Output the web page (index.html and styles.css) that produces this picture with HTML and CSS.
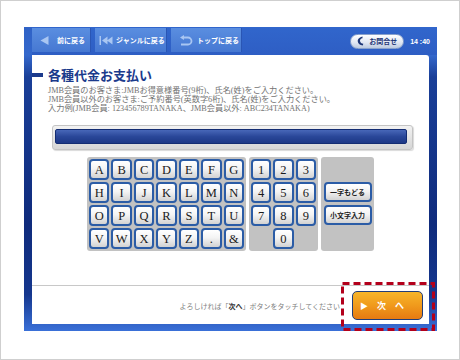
FILE: index.html
```html
<!DOCTYPE html>
<html lang="ja">
<head>
  <meta charset="UTF-8">
  <title>各種代金お支払い</title>
  <link rel="stylesheet" href="styles.css">
</head>
<body>
  <div class="page">
    <div class="frame">
      <div class="header">
        <button class="nav-btn nav-back">
          <svg width="9" height="11" viewBox="0 0 9 11"><path d="M0.5 5.5 L8.5 1 L8.5 10 Z" fill="#a9c6f2"/></svg>
          前に戻る
        </button>
        <button class="nav-btn nav-genre">
          <svg width="15" height="11" viewBox="0 0 15 11"><rect x="0.5" y="1" width="1.5" height="9" fill="#a9c6f2"/><path d="M3 5.5 L8.5 1.5 L8.5 9.5 Z M8 5.5 L13.5 1.5 L13.5 9.5 Z" fill="#a9c6f2"/></svg>
          ジャンルに戻る
        </button>
        <button class="nav-btn nav-top">
          <svg width="14" height="11" viewBox="0 0 14 11"><path d="M4 2.5 H9 A3.5 3.5 0 0 1 9 9.5 H2" fill="none" stroke="#a9c6f2" stroke-width="1.8"/><path d="M1 2.5 L5 0 L5 5 Z" fill="#a9c6f2"/></svg>
          トップに戻る
        </button>
        <div class="header-right">
          <button class="contact-btn">
            <svg width="7" height="10" viewBox="0 0 7 10"><path d="M5.5 0.5 C1.5 1.5 0.5 4 0.8 5.5 C1 7.5 3 9.3 5.8 9.5 L6.3 7.8 C4.5 7.6 3.2 6.5 3 5 C2.9 3.6 3.8 2.4 5.5 2.2 Z" fill="#1c3575"/></svg>
            お問合せ
          </button>
          <span class="clock">14 :40</span>
        </div>
      </div>

      <div class="panel">
        <h1 class="title"><span class="title-mark"></span>各種代金お支払い</h1>
        <p class="desc">
          JMB会員のお客さま:JMBお得意様番号(9桁)、氏名(姓)をご入力ください。<br>
          JMB会員以外のお客さま:ご予約番号(英数字6桁)、氏名(姓)をご入力ください。<br>
          入力例(JMB会員: 123456789TANAKA、JMB会員以外: ABC234TANAKA)
        </p>

        <div class="input-box"><div class="input-bar"></div></div>

        <div class="keyboard">
          <div class="pad pad-alpha">
            <button class="key">A</button><button class="key">B</button><button class="key">C</button><button class="key">D</button><button class="key">E</button><button class="key">F</button><button class="key">G</button>
            <button class="key">H</button><button class="key">I</button><button class="key">J</button><button class="key">K</button><button class="key">L</button><button class="key">M</button><button class="key">N</button>
            <button class="key">O</button><button class="key">P</button><button class="key">Q</button><button class="key">R</button><button class="key">S</button><button class="key">T</button><button class="key">U</button>
            <button class="key">V</button><button class="key">W</button><button class="key">X</button><button class="key">Y</button><button class="key">Z</button><button class="key">.</button><button class="key">&amp;</button>
          </div>
          <div class="pad pad-num">
            <button class="key">1</button><button class="key">2</button><button class="key">3</button>
            <button class="key">4</button><button class="key">5</button><button class="key">6</button>
            <button class="key">7</button><button class="key">8</button><button class="key">9</button>
            <button class="key key-zero">0</button>
          </div>
          <div class="pad pad-func">
            <button class="func-btn">一字もどる</button>
            <button class="func-btn">小文字入力</button>
          </div>
        </div>

        <div class="footer">
          <span class="hint">よろしければ「<b>次へ</b>」ボタンをタッチしてください</span>
          <button class="next-btn"><span class="next-arrow">&#9654;</span>次　へ</button>
        </div>
      </div>

      <svg class="highlight" width="94" height="49" viewBox="0 0 94 49">
        <rect x="1.5" y="1.5" width="91" height="46" fill="none" stroke="#b3001b" stroke-width="3" stroke-dasharray="7 4"/>
      </svg>
    </div>
  </div>
</body>
</html>
```

FILE: styles.css
```css
* {
  margin: 0;
  padding: 0;
  box-sizing: border-box;
}

body {
  background: #fff;
  font-family: "Noto Sans CJK JP", "Noto Sans", sans-serif;
}

.page {
  width: 460px;
  height: 360px;
  border: 1px solid #cfcfcf;
  padding: 26px 0 0 23px;
}

.frame {
  position: relative;
  width: 413px;
  height: 304px;
  display: flex;
  flex-direction: column;
  padding: 0 8px 7px 8px;
  background: linear-gradient(to bottom, #2f62c6 0, #3468cc 28px, #1a3f98 50px, #0f2b7c 65%, #15378e 88%, #3a70d8 100%);
}

/* header */

.header {
  height: 28px;
  display: flex;
  align-items: flex-start;
  padding-top: 1px;
  margin: 0 -8px 0 0;
  background: linear-gradient(to bottom, #3166cc, #2e5ec4);
}

.nav-btn {
  height: 24px;
  display: flex;
  align-items: center;
  margin-right: 4px;
  border: none;
  border-right: 1px solid #2a56b4;
  background: linear-gradient(to bottom, #5a8ee0, #4678d2);
  color: #fff;
  font-family: "Noto Sans CJK JP", sans-serif;
  font-size: 7px;
  font-weight: bold;
  white-space: nowrap;
}

.nav-back {
  width: 59px;
  padding-left: 8px;
  gap: 8px;
}

.nav-genre {
  width: 72px;
  padding-left: 4px;
  gap: 2px;
}

.nav-top {
  width: 71px;
  padding-left: 8px;
  gap: 4px;
}

.header-right {
  margin-left: auto;
  display: flex;
  align-items: center;
  height: 26px;
  padding-right: 7px;
}

.contact-btn {
  width: 54px;
  height: 15px;
  border-radius: 8px;
  border: 1px solid #8aa2cc;
  background: linear-gradient(to bottom, #ffffff, #dfe6f2 60%, #bccadf);
  display: flex;
  align-items: center;
  gap: 5px;
  padding-left: 6px;
  color: #1c3575;
  font-family: "Noto Sans CJK JP", sans-serif;
  font-size: 7px;
  font-weight: bold;
  white-space: nowrap;
}

.clock {
  margin-left: 6px;
  color: #fff;
  font-family: "Liberation Sans", sans-serif;
  font-size: 7px;
  font-weight: bold;
}

/* panel */

.panel {
  flex: 1;
  background: #fff;
  border-top-right-radius: 3px;
  display: flex;
  flex-direction: column;
  padding-top: 12px;
}

.title {
  display: flex;
  align-items: center;
  gap: 5px;
  height: 15px;
  color: #1b3a8c;
  font-size: 13px;
  font-weight: bold;
  line-height: 15px;
}

.title-mark {
  width: 11px;
  height: 4px;
  background: #1b3a8c;
}

.desc {
  margin: 4px 0 0 16px;
  color: #737373;
  font-family: "Liberation Serif", "Noto Sans CJK JP", serif;
  font-size: 8.2px;
  line-height: 9.2px;
}

.input-box {
  width: 361px;
  height: 25px;
  margin: 11px 0 0 20px;
  padding: 3px 5px 5px 2px;
  border: 1px solid #c4c4c4;
  border-radius: 3px;
  background: linear-gradient(to bottom, #f2f2f2, #d6d6d6);
  box-shadow: 1px 1px 1px rgba(0, 0, 0, 0.15);
}

.input-bar {
  height: 100%;
  border: 1px solid #132c72;
  border-radius: 2px;
  background: linear-gradient(to bottom, #4867b8, #2a4799 50%, #1d3886);
}

/* keyboard */

.keyboard {
  display: flex;
  gap: 3px;
  margin: 7px 0 0 55px;
}

.pad {
  height: 94px;
  padding: 2px;
  border-radius: 3px;
  background: #c2c2c2;
}

.pad-alpha {
  width: 159px;
  display: grid;
  grid-template-columns: repeat(7, 1fr);
  grid-template-rows: repeat(4, 1fr);
  gap: 2px;
}

.pad-num {
  width: 69px;
  display: grid;
  grid-template-columns: repeat(3, 1fr);
  grid-template-rows: repeat(4, 1fr);
  gap: 2px;
}

.key {
  border: 2px solid #2b5ca6;
  border-radius: 4px;
  background: linear-gradient(to bottom, #ffffff, #f4f4f4 45%, #d2d2d2);
  color: #1a1a1a;
  font-family: "Liberation Serif", serif;
  font-size: 12.5px;
  line-height: 1;
  padding-top: 2px;
}

.key-zero {
  grid-column: 2;
}

.pad-func {
  width: 53px;
  display: flex;
  flex-direction: column;
  justify-content: center;
  align-items: center;
  gap: 3px;
}

.func-btn {
  width: 48px;
  height: 20px;
  border: 2px solid #2b5ca6;
  border-radius: 4px;
  background: linear-gradient(to bottom, #ffffff, #f4f4f4 45%, #d2d2d2);
  color: #222;
  font-family: "Noto Sans CJK JP", sans-serif;
  font-size: 7px;
  font-weight: bold;
  white-space: nowrap;
}

/* footer */

.footer {
  margin-top: auto;
  height: 39px;
  border-top: 1px solid #c8c8c8;
  display: flex;
  align-items: flex-start;
  justify-content: flex-end;
  padding: 5px 6px 0 0;
}

.hint {
  margin: 10px 12px 0 0;
  color: #808080;
  font-size: 7px;
  line-height: 10px;
  white-space: nowrap;
}

.hint b {
  color: #333;
}

.next-btn {
  width: 71px;
  height: 29px;
  border: 1.5px solid #213d78;
  border-radius: 5px;
  background: linear-gradient(to bottom, #f7b52a, #f09a1c 50%, #e67a12);
  color: #fff;
  font-family: "Noto Sans CJK JP", sans-serif;
  font-size: 9px;
  font-weight: bold;
  display: flex;
  align-items: center;
  padding-left: 7px;
}

.next-arrow {
  font-size: 8px;
  margin-right: 9px;
}

.highlight {
  position: absolute;
  left: 317px;
  top: 255px;
}
```
